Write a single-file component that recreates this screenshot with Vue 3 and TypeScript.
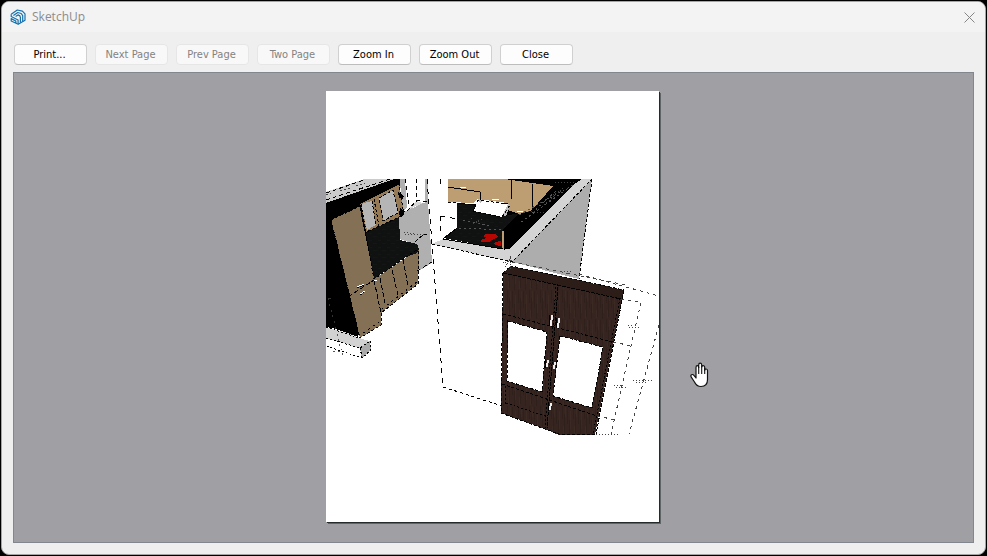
<script setup lang="ts">
interface ToolButton {
  label: string
  disabled: boolean
}

const buttons: ToolButton[] = [
  { label: 'Print...', disabled: false },
  { label: 'Next Page', disabled: true },
  { label: 'Prev Page', disabled: true },
  { label: 'Two Page', disabled: true },
  { label: 'Zoom In', disabled: false },
  { label: 'Zoom Out', disabled: false },
  { label: 'Close', disabled: false },
]
</script>

<template>
  <div class="desktop">
    <main class="window">
      <header class="titlebar">
        <svg class="logo" viewBox="0 0 16 16" aria-hidden="true">
          <g fill="none" stroke="#1570ad" stroke-width="1.2" stroke-linejoin="round">
            <path d="M1.2 5.2 7.3 1 12.4 2.100 15 4.800v6.400L8.200 15.300 1.200 12V9.600L5.800 12V14" />
            <path d="M1.200 5.200v2.300l6.900 3.500v4M3.400 6.400l4.400-2.900 3.400 1 1.500 2.100v5.800" />
            <path d="M5.600 7.400 8 5.900l1.900 1 .5 1.500v5.200" />
          </g>
        </svg>
        <h1 class="title">SketchUp</h1>
        <button class="dismiss" type="button" aria-label="Close window">
          <svg viewBox="0 0 11 11" aria-hidden="true">
            <path d="M.5.5l10 10M10.500.5l-10 10" fill="none" stroke="#858585" />
          </svg>
        </button>
      </header>
      <nav class="toolbar">
        <button v-for="b in buttons" :key="b.label" class="tool" type="button" :disabled="b.disabled">
          {{ b.label }}
        </button>
      </nav>
      <section class="preview">
        <div class="sheet">
          <svg class="drawing" viewBox="326 91 333 431" role="img" aria-label="Kitchen model" shape-rendering="crispEdges">
            <defs>
              <pattern id="wood" width="11" height="29" patternUnits="userSpaceOnUse">
                <rect width="11" height="29" fill="#35241f" />
                <path d="M1 0v13M3 8v19M6 1v17M8 14v15" stroke="#30201c" />
                <path d="M4 1v10M9 5v18M2 20v8" stroke="#3b2924" />
              </pattern>
              <pattern id="granite" width="9" height="7" patternUnits="userSpaceOnUse">
                <rect width="9" height="7" fill="#101212" />
                <path d="M0 2h3M4 5h4" stroke="#141616" />
              </pattern>
            </defs>

            <!-- Left cabinets -->
            <path fill="#cbcbcb" d="M326 192 364 179H397L326 203z" />
            <path fill="#000" d="M326 203 394 179H403L400 190 374 279 358 337 336 329 326 327z" />
            <path fill="#b0b0b0" d="M400 179H405L407 207 402 214zM425 179H428V201H425zM399 215 406 211 428 201 432 263 417 272 418 245 399 239z" />
            <path fill="#d8d8d8" d="M407 211 416 201 423 203 410 209z" />
            <path fill="#847054" d="M331 220 360 206 374 279 419 249 418 284 381 313V325L360 338 343 268z" />
            <path fill="#967a55" d="M356 203 399 183 404 215 366 232 361 205z" />
            <path fill="#b5b5b5" d="M361 204 372 201 376 225 367 230zM379 198 393 190 398 213 383 221z" />
            <path fill="#000" d="M352 202 399 181 400 184 358 205zM398 192 404 196 403 199 399 198zM400 208 405 211 402 217 399 215z" />
            <path fill="url(#granite)" d="M366 233 399 217 400 240 417 244 419 249 417 253 404 258 374 279z" />
            <g fill="none" stroke="#000">
              <path stroke-dasharray="3 2" d="M331 220 360 206 374 279 418 249M331 220 360 338 381 325V313L418 284V249M361 204 366 232 404 215 399 184M372 201 376 225M374 199 379 226M379 198 393 190 398 213 383 221z" />
              <path stroke-dasharray="5 2" d="M348 297 374 280M380 278 385 303M392 270 398 295M403 259 408 286M374 280 381 313" />
              <path stroke-dasharray="2 4" d="M363 333 382 320M382 309 418 281" />
              <path stroke-dasharray="4 3" d="M326 193 364 180M326 200 390 179M416 179V202M405 179 409 207M407 211 417 200 428 202M417 271 432 262" />
              <path stroke="#333" stroke-dasharray="2 4" d="M328 298 336 329M329 298H334" />
              <path stroke="#444" stroke-dasharray="2 2" d="M326 195 333 192M340 191 350 188M356 186 365 183" />
              <path stroke="#444" stroke-dasharray="1 2" d="M404 232 415 234M405 234 424 235" />
              <path stroke-dasharray="4 2" d="M415 242 424 234 427 235" />
            </g>
            <path d="M357 287 364 284M360 294 365 291M374 280H377" stroke="#fff" />
            <path d="M357 288 364 285M360 295 365 292" stroke="#000" stroke-dasharray="2 1" />

            <!-- Floor slab -->
            <path fill="#d2d2d2" d="M326 327 348 333 359 338 370 341 360 348 326 338z" />
            <path fill="#aaa" d="M360 348 370 341 371 350 362 358z" />
            <path fill="none" stroke="#000" stroke-dasharray="2 2" d="M326 338 360 348 370 341 371 350 362 358 326 346M360 348 362 357M326 327 359 338" />
            <path fill="none" stroke="#555" stroke-dasharray="2 3" d="M337 334 343 357M333 351 343 352" />

            <!-- Rear kitchen -->
            <path fill="#000" d="M504 179H583L508 250 503 249 443 238 457 228V203L473 204 504 214z" />
            <path fill="url(#granite)" d="M457 203 473 205 505 216 519 213 503 230V249L443 238 457 228z" />
            <path fill="#bd9e73" d="M448 179H505L553 186 531 211 519 214 508 210V203L477 199 474 203 448 202z" />
            <path fill="#fff" d="M478 200 508 204 502 217 473 211z" />
            <path fill="#bdbdbd" d="M508 204 510 205 506 216 502 216zM478 199 485 200 480 203z" />
            <path fill="#d4d4d4" d="M432 244 443 239 503 249 509 249 576 183 582 179H592L512 262z" />
            <path fill="#adadad" d="M592 179 579 279 512 262z" />
            <path fill="#bd9e73" d="M502 231H504V249H502z" />
            <path fill="#b80603" d="M486 234H495L498 237 492 240 489 242H481L482 239 487 238 483 236zM494 243 499 241H501V246L495 245z" />
            <g fill="none" stroke="#000">
              <path d="M511 179V199M532 184V211M448 187 480 192V200M457 228 443 239 503 249M504 229V250" />
              <path stroke-dasharray="3 2" d="M432 244 512 262 592 179M473 211 478 200 508 204M448 202 474 205M592 179 579 279M473 211 502 217 510 205" />
              <path stroke="#555" stroke-dasharray="2 3" d="M459 228 503 230M463 220 490 226M519 215 575 184M521 222 570 187M532 213 556 191" />
              <path stroke-dasharray="5 5" d="M441 179 440 185M440 216V236M440 216 458 219" />
            </g>
            <path fill="none" stroke="#fff" d="M460 187H466M492 199 499 200M517 211 523 212" />
            <path fill="none" stroke="#444" stroke-dasharray="1 2" d="M471 218 481 225M473 224 484 218M540 203 561 190M542 207 565 187M555 183 575 182M525 211 545 213" />

            <!-- Partition edges -->
            <path fill="none" stroke="#000" stroke-dasharray="5 5" d="M427 179 443 387" />
            <path fill="none" stroke="#000" stroke-dasharray="3 3" d="M443 387 502 406" />

            <!-- Wardrobe -->
            <path fill="url(#wood)" fill-rule="evenodd" d="M503 273 511 266 624 290 595 435H559L545 429 501 413zM508 321 507 381 542 392 547 332zM560 336 553 396 592 408 603 347z" />
            <path fill="#2d1d19" d="M503 273 511 266 624 290 621 299z" />
            <g fill="none" stroke="#000">
              <path stroke-dasharray="4 1" d="M503 273 621 299M558 287 547 428M624 290 596 434" />
              <path stroke-dasharray="3 2" d="M503 273 511 266 624 290M503 273 501 413 545 429 559 434H596M503 314 613 342M502 384 597 416M508 321 547 332 542 392 507 381zM560 336 603 347 592 408 553 396z" />
              <path stroke-dasharray="2 2" d="M620 298 593 434M556 287 545 428M506 386 505 404M506 403 545 416" />
            </g>
            <path fill="none" stroke="#eee" stroke-width="2" d="M552 315 551 326M559 318 558 328M548 360 547 367M555 362 554 369M551 403 550 410" />
            <path fill="none" stroke="#000" d="M550 315 549 326M557 318 556 328M546 359 545 368M549 402 548 410" />

            <!-- Dimension lines -->
            <g fill="none" stroke="#444">
              <path stroke-dasharray="3 4" d="M512 262 626 285M579 274 659 296M621 299 641 302 611 434M613 342 632 346M597 416 616 420M659 325 629 434" />
              <path stroke-dasharray="1 2" d="M564 271H572M566 273H570M628 325H634M629 327H640M614 385H622M616 387H627M633 380H652M636 382H648M596 434H618" />
              <path stroke-dasharray="1 1" d="M503 263 512 260M505 267 510 258V269" />
            </g>
          </svg>
          <svg class="hand" viewBox="0 0 20 26" aria-hidden="true">
            <path
              d="M6 16V5.500c0-2.400 2.500-2.400 2.700 0V3c0-2.400 2.800-2.400 3 0v2c.2-2 2.900-2 3 .3v3c.2-1.900 2.800-1.700 2.800.3v9.200c0 4.500-2.600 6.700-6.500 6.700-3.300 0-5.200-1.600-6.500-4.500L1.300 15.200c-1.500-2.300 1.300-3.500 2.600-1.900z"
              fill="#fff" stroke="#111" stroke-width="1.200" stroke-linejoin="round"
            />
            <path d="M8.700 5v7M11.700 4v8M14.700 6v6" fill="none" stroke="#111" stroke-width="1.100" />
          </svg>
        </div>
      </section>
    </main>
  </div>
</template>

<style>
body {
  margin: 0;
  background: #000;
}
</style>

<style scoped>
.desktop {
  box-sizing: border-box;
  display: flex;
  min-height: 100vh;
  padding: 1px;
  font-family: "DejaVu Sans Condensed", "DejaVu Sans", sans-serif;
}
.window {
  box-sizing: border-box;
  flex: 1;
  display: flex;
  flex-direction: column;
  border: 1px solid #a5a5a5;
  border-radius: 8px;
  background: #efefef;
  overflow: hidden;
}
.titlebar {
  display: flex;
  align-items: center;
  gap: 6px;
  height: 30px;
  padding: 0 10px 0 8px;
  background: #f3f3f3;
}
.logo {
  width: 16px;
  height: 16px;
}
.title {
  flex: 1;
  margin: 0;
  font-family: "Open Sans", sans-serif;
  font-size: 12px;
  font-weight: 400;
  line-height: 16px;
  color: #8c8c8c;
}
.dismiss {
  display: flex;
  padding: 0;
  border: 0;
  background: none;
}
.dismiss svg {
  width: 11px;
  height: 11px;
}
.toolbar {
  display: flex;
  gap: 8px;
  padding: 12px 12px 7px;
}
.tool {
  box-sizing: border-box;
  width: 73px;
  height: 21px;
  padding: 0 2px 0 0;
  border: 1px solid #d0d0d0;
  border-bottom-color: #bdbdbd;
  border-radius: 4px;
  background: #fdfdfd;
  font-family: inherit;
  font-size: 11px;
  line-height: 18px;
  color: #000;
}
.tool:disabled {
  border-color: #e6e6e6;
  background: #f8f8f8;
  color: #838383;
}
.preview {
  flex: 1;
  display: flex;
  justify-content: center;
  margin: 0 11px 11px;
  padding: 18px 2px 20px 0;
  border: 1px solid #82868f;
  background: #a09fa4;
}
.sheet {
  position: relative;
  width: 333px;
  align-self: flex-start;
  background: #fff;
  box-shadow: 1px 1px 0 #252b2b, 2px 2px 0 #5f6467;
}
.drawing {
  display: block;
  width: 100%;
}
.hand {
  position: absolute;
  top: 271px;
  left: 364px;
  width: 20px;
  height: 26px;
}
</style>
